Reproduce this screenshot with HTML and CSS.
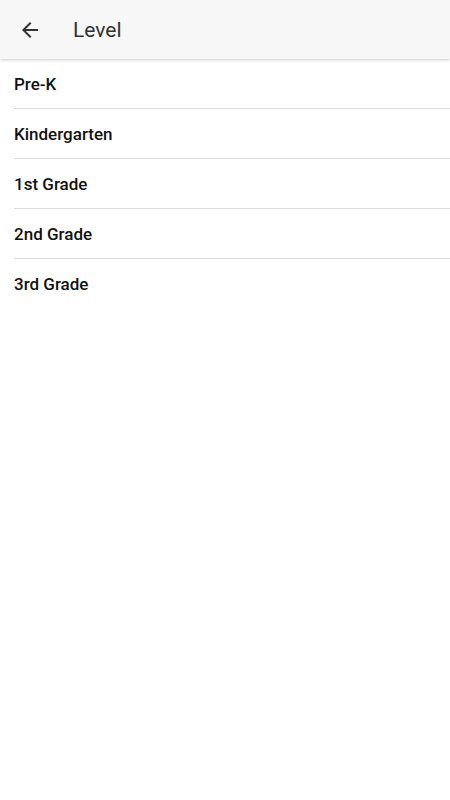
FILE: index.html
```html
<!DOCTYPE html>
<html lang="en">
<head>
  <meta charset="UTF-8">
  <meta name="viewport" content="width=device-width, initial-scale=1.0">
  <title>Level</title>
  <link rel="stylesheet" href="styles.css">
</head>
<body>

  <div class="toolbar">
    <button class="back" aria-label="Back">
      <svg width="24" height="24" viewBox="0 0 24 24">
        <path d="M20 11H7.83l5.59-5.59L12 4l-8 8 8 8 1.41-1.41L7.83 13H20v-2z" fill="#333"/>
      </svg>
    </button>
    <h1 class="title">Level</h1>
  </div>

  <ul class="levels">
    <li>Pre-K</li>
    <li>Kindergarten</li>
    <li>1st Grade</li>
    <li>2nd Grade</li>
    <li>3rd Grade</li>
  </ul>

</body>
</html>
```

FILE: styles.css
```css
body {
  margin: 0;
  font-family: Roboto, "Liberation Sans", Arial, sans-serif;
  background-color: #fff;
}
.toolbar {
  height: 59px;
  display: flex;
  align-items: center;
  background-color: #f7f7f7;
  box-shadow: 0 1px 3px rgba(0, 0, 0, 0.2);
  position: relative;
}
.back {
  width: 60px;
  height: 59px;
  padding: 0 0 0 18px;
  display: flex;
  align-items: center;
  border: none;
  background: none;
  cursor: pointer;
}
.title {
  margin: 0 0 0 13px;
  font-size: 21px;
  font-weight: 400;
  color: #333;
}
.levels {
  list-style: none;
  margin: 0;
  padding: 0 0 0 14px;
}
.levels li {
  height: 49px;
  display: flex;
  align-items: center;
  font-size: 17px;
  font-weight: 500;
  color: #111;
  border-bottom: 1px solid #ddd;
}
.levels li:last-child {
  border-bottom: none;
}
```
